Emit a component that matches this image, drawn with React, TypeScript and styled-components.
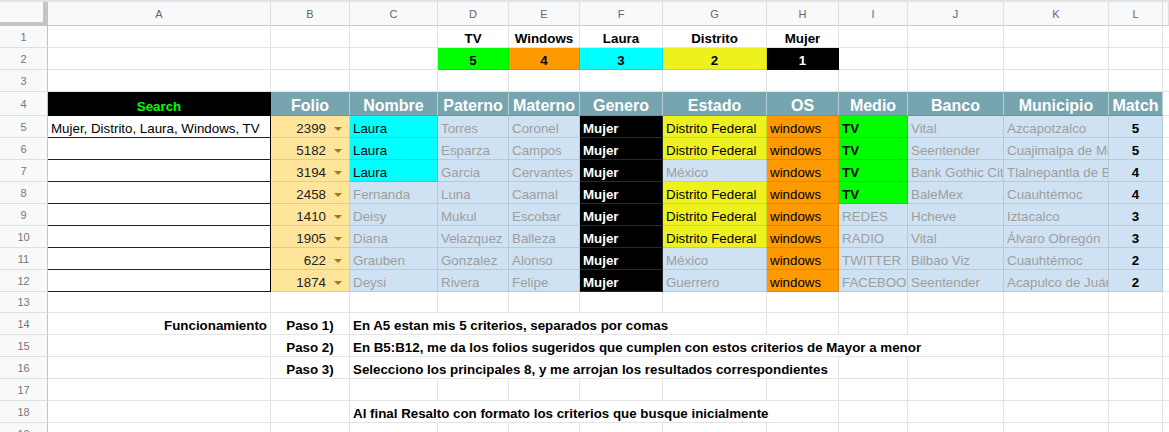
import React from 'react';
import styled, { createGlobalStyle } from 'styled-components';

const GlobalStyle = createGlobalStyle`
  html, body { margin: 0; padding: 0; background: #ffffff; overflow: hidden; }
  body { font-family: "Liberation Sans", Arial, sans-serif; }
`;

const COLS = '48px 223px 79px 88px 71px 71px 83px 104px 72px 69px 96px 105px 54px 1fr';

const GRID = 'rgba(0,0,0,0.11)';
const BLUE = '#cfe2f3';
const TEAL = '#76a5af';
const CYAN = '#00ffff';
const GREEN = '#00ff00';
const ORANGE = '#ff9900';
const YELLOW = '#edf21e';
const GOLD = '#ffe599';
const GREY_TEXT = '#9e9e9e';

const Sheet = styled.div`
  width: 1169px;
  height: 432px;
  overflow: hidden;
  border-top: 2px solid #e3e3e3;
  box-sizing: border-box;
  background: #fff;
`;

const Row = styled.div<{ $h: number }>`
  display: grid;
  grid-template-columns: ${COLS};
  height: ${p => p.$h}px;
`;

const Corner = styled.div`
  background: #f8f9fa;
  border-right: 5px solid #c4c4c4;
  border-bottom: 4px solid #c4c4c4;
  box-sizing: border-box;
`;

const ColLetter = styled.div`
  background: #f8f9fa;
  border-right: 1px solid #e0e0e0;
  border-bottom: 1px solid #c8c8c8;
  box-sizing: border-box;
  display: flex;
  align-items: center;
  justify-content: center;
  padding-top: 1px;
  font-size: 11px;
  color: #666;
`;

const RowNum = styled.div`
  background: #f8f9fa;
  border-right: 1px solid #c4c4c4;
  border-bottom: 1px solid #e0e0e0;
  box-sizing: border-box;
  display: flex;
  align-items: center;
  justify-content: center;
  font-size: 11px;
  color: #777;
`;

type CellProps = {
  $bg?: string;
  $color?: string;
  $bold?: boolean;
  $align?: 'left' | 'center' | 'right';
  $span?: number;
  $line?: string;
  $right?: string;
  $bottom?: string;
};

const Cell = styled.div<CellProps>`
  grid-column: span ${p => p.$span ?? 1};
  min-width: 0;
  box-sizing: border-box;
  display: flex;
  align-items: flex-end;
  justify-content: ${p => (p.$align === 'center' ? 'center' : p.$align === 'right' ? 'flex-end' : 'flex-start')};
  padding: 0 3px 0;
  background: ${p => p.$bg ?? '#fff'};
  color: ${p => p.$color ?? '#000'};
  font-weight: ${p => (p.$bold ? 700 : 400)};
  font-size: 13.33px;
  line-height: 16px;
  white-space: nowrap;
  overflow: hidden;
  border-right: 1px solid ${p => p.$right ?? p.$line ?? GRID};
  border-bottom: 1px solid ${p => p.$bottom ?? p.$line ?? GRID};
`;

const HeadCell = styled.div`
  min-width: 0;
  box-sizing: border-box;
  display: flex;
  align-items: flex-end;
  justify-content: center;
  padding: 0 2px 0;
  background: ${TEAL};
  color: #fff;
  font-weight: 700;
  font-size: 16px;
  line-height: 19px;
  white-space: nowrap;
  overflow: hidden;
  border-right: 1px solid rgba(255, 255, 255, 0.45);
  border-bottom: 1px solid rgba(0, 0, 0, 0.1);
`;

const FolioCell = styled.div`
  min-width: 0;
  box-sizing: border-box;
  display: flex;
  align-items: flex-end;
  justify-content: flex-end;
  gap: 8px;
  padding: 0 7px 0 3px;
  background: ${GOLD};
  color: #222;
  font-size: 13.33px;
  line-height: 16px;
  border-right: 1px solid ${GRID};
  border-bottom: 1px solid ${GRID};
`;

const Caret = styled.span`
  width: 0;
  height: 0;
  border-left: 4px solid transparent;
  border-right: 4px solid transparent;
  border-top: 4px solid #a07d12;
  margin-bottom: 6px;
`;

const letters = ['A', 'B', 'C', 'D', 'E', 'F', 'G', 'H', 'I', 'J', 'K', 'L', ''];

const criteria = [
  { label: 'TV', n: '5', bg: GREEN, color: '#000' },
  { label: 'Windows', n: '4', bg: ORANGE, color: '#000' },
  { label: 'Laura', n: '3', bg: CYAN, color: '#000' },
  { label: 'Distrito', n: '2', bg: YELLOW, color: '#000' },
  { label: 'Mujer', n: '1', bg: '#000', color: '#fff' },
];

const headers = ['Folio', 'Nombre', 'Paterno', 'Materno', 'Genero', 'Estado', 'OS', 'Medio', 'Banco', 'Municipio', 'Match'];

type Rec = {
  folio: number;
  nombre: string;
  pat: string;
  mat: string;
  estado: string;
  medio: string;
  banco: string;
  mun: string;
  match: number;
};

const records: Rec[] = [
  { folio: 2399, nombre: 'Laura', pat: 'Torres', mat: 'Coronel', estado: 'Distrito Federal', medio: 'TV', banco: 'Vital', mun: 'Azcapotzalco', match: 5 },
  { folio: 5182, nombre: 'Laura', pat: 'Esparza', mat: 'Campos', estado: 'Distrito Federal', medio: 'TV', banco: 'Seentender', mun: 'Cuajimalpa de Morelos', match: 5 },
  { folio: 3194, nombre: 'Laura', pat: 'Garcia', mat: 'Cervantes', estado: 'México', medio: 'TV', banco: 'Bank Gothic City', mun: 'Tlalnepantla de Baz', match: 4 },
  { folio: 2458, nombre: 'Fernanda', pat: 'Luna', mat: 'Caamal', estado: 'Distrito Federal', medio: 'TV', banco: 'BaleMex', mun: 'Cuauhtémoc', match: 4 },
  { folio: 1410, nombre: 'Deisy', pat: 'Mukul', mat: 'Escobar', estado: 'Distrito Federal', medio: 'REDES', banco: 'Hcheve', mun: 'Iztacalco', match: 3 },
  { folio: 1905, nombre: 'Diana', pat: 'Velazquez', mat: 'Balleza', estado: 'Distrito Federal', medio: 'RADIO', banco: 'Vital', mun: 'Álvaro Obregón', match: 3 },
  { folio: 622, nombre: 'Grauben', pat: 'Gonzalez', mat: 'Alonso', estado: 'México', medio: 'TWITTER', banco: 'Bilbao Viz', mun: 'Cuauhtémoc', match: 2 },
  { folio: 1874, nombre: 'Deysi', pat: 'Rivera', mat: 'Felipe', estado: 'Guerrero', medio: 'FACEBOOK', banco: 'Seentender', mun: 'Acapulco de Juárez', match: 2 },
];

const Empty: React.FC<{ n: number }> = ({ n }) => (
  <>
    {Array.from({ length: n }).map((_, i) => (
      <Cell key={i} />
    ))}
  </>
);

const DataRow: React.FC<{ r: Rec; idx: number }> = ({ r, idx }) => {
  const isLaura = r.nombre === 'Laura';
  const isDF = r.estado === 'Distrito Federal';
  const isTV = r.medio === 'TV';
  return (
    <Row $h={22}>
      <RowNum>{idx + 5}</RowNum>
      <Cell $right="#000" $bottom="#222">{idx === 0 ? 'Mujer, Distrito, Laura, Windows, TV' : ''}</Cell>
      <FolioCell>
        <span>{r.folio}</span>
        <Caret />
      </FolioCell>
      <Cell $bg={isLaura ? CYAN : BLUE} $color={isLaura ? '#000' : GREY_TEXT}>{r.nombre}</Cell>
      <Cell $bg={BLUE} $color={GREY_TEXT}>{r.pat}</Cell>
      <Cell $bg={BLUE} $color={GREY_TEXT}>{r.mat}</Cell>
      <Cell $bg="#000" $color="#fff" $bold $line="#2a2a2a">Mujer</Cell>
      <Cell $bg={isDF ? YELLOW : BLUE} $color={isDF ? '#000' : GREY_TEXT}>{r.estado}</Cell>
      <Cell $bg={ORANGE}>windows</Cell>
      <Cell $bg={isTV ? GREEN : BLUE} $color={isTV ? '#000' : GREY_TEXT} $bold={isTV}>{r.medio}</Cell>
      <Cell $bg={BLUE} $color={GREY_TEXT}>{r.banco}</Cell>
      <Cell $bg={BLUE} $color={GREY_TEXT}>{r.mun}</Cell>
      <Cell $bg={BLUE} $bold $align="center">{r.match}</Cell>
      <Cell />
    </Row>
  );
};

export default function App() {
  return (
    <>
      <GlobalStyle />
      <Sheet>
        <Row $h={24}>
          <Corner />
          {letters.map((l, i) => (
            <ColLetter key={i}>{l}</ColLetter>
          ))}
        </Row>

        <Row $h={22}>
          <RowNum>1</RowNum>
          <Empty n={3} />
          {criteria.map(c => (
            <Cell key={c.label} $bold $align="center">{c.label}</Cell>
          ))}
          <Empty n={5} />
        </Row>

        <Row $h={22}>
          <RowNum>2</RowNum>
          <Empty n={3} />
          {criteria.map(c => (
            <Cell key={c.label} $bold $align="center" $bg={c.bg} $color={c.color}>{c.n}</Cell>
          ))}
          <Empty n={5} />
        </Row>

        <Row $h={22}>
          <RowNum>3</RowNum>
          <Empty n={13} />
        </Row>

        <Row $h={24}>
          <RowNum>4</RowNum>
          <Cell $bg="#000" $color="#00ff00" $bold $align="center" $line="#000">Search</Cell>
          {headers.map(h => (
            <HeadCell key={h}>{h}</HeadCell>
          ))}
          <Cell />
        </Row>

        {records.map((r, i) => (
          <DataRow key={r.folio} r={r} idx={i} />
        ))}

        <Row $h={21}>
          <RowNum>13</RowNum>
          <Empty n={13} />
        </Row>

        <Row $h={22}>
          <RowNum>14</RowNum>
          <Cell $bold $align="right">Funcionamiento</Cell>
          <Cell $bold $align="center">Paso 1)</Cell>
          <Cell $bold $span={5}>En A5 estan mis 5 criterios, separados por comas</Cell>
          <Empty n={6} />
        </Row>

        <Row $h={22}>
          <RowNum>15</RowNum>
          <Cell />
          <Cell $bold $align="center">Paso 2)</Cell>
          <Cell $bold $span={8}>En B5:B12, me da los folios sugeridos que cumplen con estos criterios de Mayor a menor</Cell>
          <Empty n={3} />
        </Row>

        <Row $h={22}>
          <RowNum>16</RowNum>
          <Cell />
          <Cell $bold $align="center">Paso 3)</Cell>
          <Cell $bold $span={6}>Selecciono los principales 8, y me arrojan los resultados correspondientes</Cell>
          <Empty n={5} />
        </Row>

        <Row $h={22}>
          <RowNum>17</RowNum>
          <Empty n={13} />
        </Row>

        <Row $h={22}>
          <RowNum>18</RowNum>
          <Empty n={2} />
          <Cell $bold $span={6}>Al final Resalto con formato los criterios que busque inicialmente</Cell>
          <Empty n={5} />
        </Row>

        <Row $h={22}>
          <RowNum>19</RowNum>
          <Empty n={13} />
        </Row>
      </Sheet>
    </>
  );
}
